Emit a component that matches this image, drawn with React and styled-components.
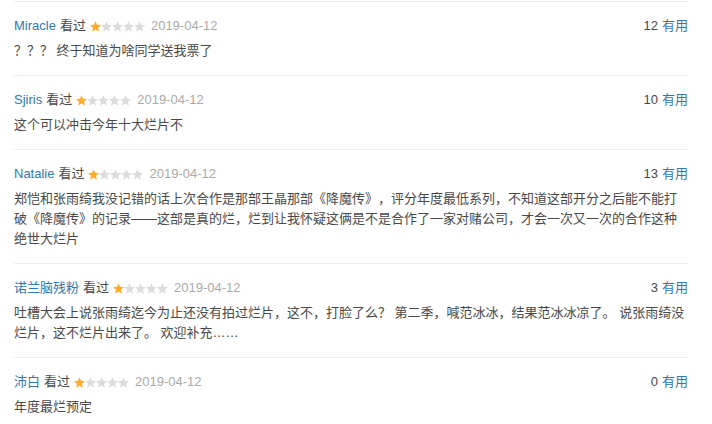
import React from "react";
import styled, { createGlobalStyle } from "styled-components";

const Global = createGlobalStyle`
  html, body { margin: 0; padding: 0; background: #fff; }
  body { font-family: "Liberation Sans", Arial, "Noto Sans CJK SC", sans-serif; }
`;

const List = styled.div`
  width: 674px;
  margin: 1px 0 0 14px;
`;

const Item = styled.div`
  border-top: 1px solid #eeeeee;
  padding: 14px 0 14px;
`;

const Head = styled.div`
  display: flex;
  align-items: center;
  height: 20px;
  font-size: 13px;
  line-height: 20px;
`;

const Name = styled.span`
  color: #3377aa;
`;

const Seen = styled.span`
  color: #494949;
  margin-left: 4px;
`;

const Stars = styled.span`
  display: inline-flex;
  align-items: center;
  margin-left: 4px;
`;

const DateText = styled.span`
  color: #aaaaaa;
  margin-left: 6px;
`;

const Votes = styled.span`
  margin-left: auto;
  color: #494949;
`;

const Useful = styled.span`
  color: #3377aa;
  margin-left: 4px;
`;

const Comment = styled.p`
  margin: 5px 0 0;
  font-size: 13px;
  line-height: 20px;
  color: #494949;
  text-spacing-trim: space-all;
  font-family: "Liberation Sans", Arial, "Noto Sans CJK SC", sans-serif;
`;

const Star = ({ on }) => (
  <svg width="11" height="11" viewBox="1 1 22 22">
    <path
      d="M12 1.5l3.1 7.2 7.8.7-5.9 5.2 1.8 7.7L12 18.2l-6.8 4.1 1.8-7.7L1.1 9.4l7.8-.7z"
      fill={on ? "#ffac2d" : "#dcdcdc"}
    />
  </svg>
);

const data = [
  { name: "Miracle", votes: 12, text: "？？？ 终于知道为啥同学送我票了" },
  { name: "Sjiris", votes: 10, text: "这个可以冲击今年十大烂片不" },
  {
    name: "Natalie",
    votes: 13,
    text:
      "郑恺和张雨绮我没记错的话上次合作是那部王晶那部《降魔传》，评分年度最低系列，不知道这部开分之后能不能打破《降魔传》的记录——这部是真的烂，烂到让我怀疑这俩是不是合作了一家对赌公司，才会一次又一次的合作这种绝世大烂片",
  },
  {
    name: "诺兰脑残粉",
    votes: 3,
    text:
      "吐槽大会上说张雨绮迄今为止还没有拍过烂片，这不，打脸了么？ 第二季，喊范冰冰，结果范冰冰凉了。 说张雨绮没烂片，这不烂片出来了。 欢迎补充……",
  },
  { name: "沛白", votes: 0, text: "年度最烂预定" },
];

export default function App() {
  return (
    <>
      <Global />
      <List>
        {data.map((d, i) => (
          <Item key={i}>
            <Head>
              <Name>{d.name}</Name>
              <Seen>看过</Seen>
              <Stars>
                {[0, 1, 2, 3, 4].map((s) => (
                  <Star key={s} on={s < 1} />
                ))}
              </Stars>
              <DateText>2019-04-12</DateText>
              <Votes>
                {d.votes}
                <Useful>有用</Useful>
              </Votes>
            </Head>
            <Comment>{d.text}</Comment>
          </Item>
        ))}
      </List>
    </>
  );
}
